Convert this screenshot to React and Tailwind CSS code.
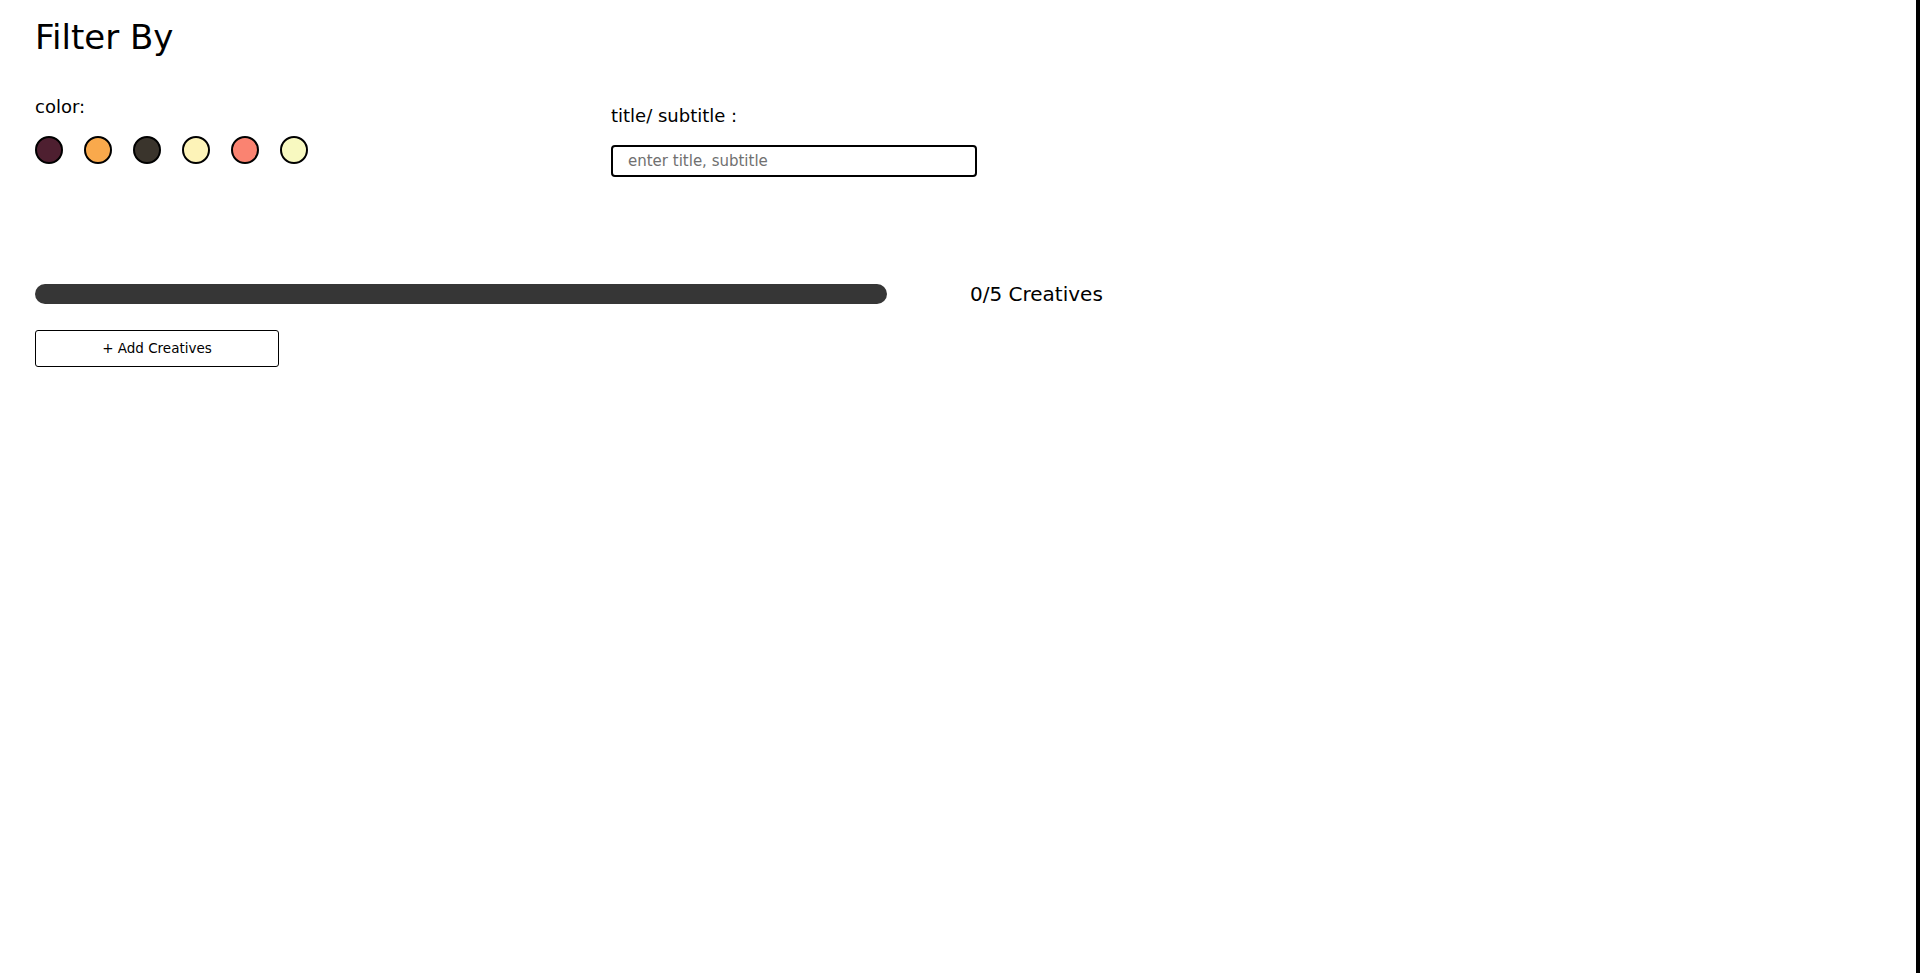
const swatches = ["#4e1f30", "#f9a94c", "#3a342c", "#fdf3b8", "#fa8371", "#f8f9c0"];

export default function App() {
  return (
    <div
      className="min-h-[973px] border-r-4 border-black bg-white px-[35px] text-black"
      style={{ fontFamily: "'DejaVu Sans', 'Noto Sans', sans-serif" }}
    >
      <h1 className="pt-[20px] text-[34px] leading-none">Filter By</h1>

      {/* filters */}
      <div className="mt-[44px] flex">
        <div className="w-[576px]">
          <p className="text-[18px] leading-none">color:</p>
          <div className="mt-[20px] flex gap-[21px]">
            {swatches.map((c) => (
              <button
                key={c}
                className="h-7 w-7 rounded-full border-2 border-black"
                style={{ backgroundColor: c }}
              />
            ))}
          </div>
        </div>
        <div className="pt-[9px]">
          <label className="block text-[18px] leading-none">title/ subtitle :</label>
          <input
            type="text"
            placeholder="enter title, subtitle"
            className="mt-[20px] block h-[32px] w-[366px] rounded-[4px] border-2 border-black px-[15px] text-[15px] outline-none placeholder:text-[#707070]"
          />
        </div>
      </div>

      {/* progress */}
      <div className="mt-[107px] flex items-center">
        <div className="h-5 w-[852px] rounded-full bg-[#363636]" />
        <span className="ml-[83px] text-[20px] leading-none">0/5 Creatives</span>
      </div>

      <button className="mt-[26px] h-[37px] w-[244px] rounded-[3px] border border-black text-[13.5px]">
        + Add Creatives
      </button>
    </div>
  );
}
